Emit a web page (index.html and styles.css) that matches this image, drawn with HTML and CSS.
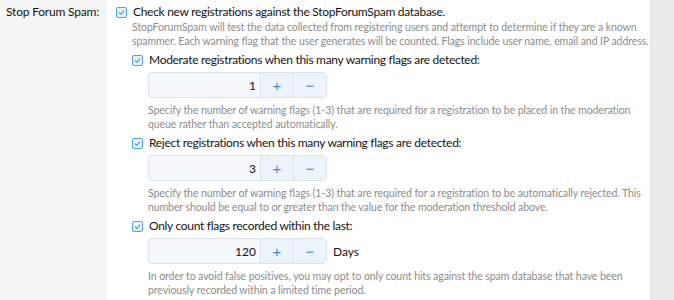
FILE: index.html
```html
<!DOCTYPE html>
<html lang="en">
<head>
    <meta charset="UTF-8">
    <title>Stop Forum Spam</title>
    <link rel="stylesheet" href="styles.css">
</head>
<body>
    <div class="form-row">
        <div class="label-col">Stop Forum Spam:</div>
        <div class="input-col">
            <label class="check">
                <span class="box"><svg viewBox="0 0 10 10"><path d="M2.3 5.2 L4.2 7 L7.8 3.2"/></svg></span>
                Check new registrations against the StopForumSpam database.
            </label>
            <div class="check-body">
                <p class="explain">StopForumSpam will test the data collected from registering users and attempt to determine if they are a known<br>spammer. Each warning flag that the user generates will be counted. Flags include user name, email and IP address.</p>
            </div>

            <div class="dependent">
                <label class="check">
                    <span class="box"><svg viewBox="0 0 10 10"><path d="M2.3 5.2 L4.2 7 L7.8 3.2"/></svg></span>
                    Moderate registrations when this many warning flags are detected:
                </label>
                <div class="check-body">
                    <div class="spin-row">
                        <div class="spinbox">
                            <input class="spin-value" type="text" value="1">
                            <button class="spin-btn">+</button>
                            <button class="spin-btn">&minus;</button>
                        </div>
                    </div>
                    <p class="explain">Specify the number of warning flags (1-3) that are required for a registration to be placed in the moderation<br>queue rather than accepted automatically.</p>
                </div>

                <label class="check">
                    <span class="box"><svg viewBox="0 0 10 10"><path d="M2.3 5.2 L4.2 7 L7.8 3.2"/></svg></span>
                    Reject registrations when this many warning flags are detected:
                </label>
                <div class="check-body">
                    <div class="spin-row">
                        <div class="spinbox">
                            <input class="spin-value" type="text" value="3">
                            <button class="spin-btn">+</button>
                            <button class="spin-btn">&minus;</button>
                        </div>
                    </div>
                    <p class="explain">Specify the number of warning flags (1-3) that are required for a registration to be automatically rejected. This<br>number should be equal to or greater than the value for the moderation threshold above.</p>
                </div>

                <label class="check">
                    <span class="box"><svg viewBox="0 0 10 10"><path d="M2.3 5.2 L4.2 7 L7.8 3.2"/></svg></span>
                    Only count flags recorded within the last:
                </label>
                <div class="check-body">
                    <div class="spin-row">
                        <div class="spinbox">
                            <input class="spin-value" type="text" value="120">
                            <button class="spin-btn">+</button>
                            <button class="spin-btn">&minus;</button>
                        </div>
                        <span class="units">Days</span>
                    </div>
                    <p class="explain">In order to avoid false positives, you may opt to only count hits against the spam database that have been<br>previously recorded within a limited time period.</p>
                </div>
            </div>
        </div>
        <div class="side-col"></div>
    </div>
</body>
</html>
```

FILE: styles.css
```css
body {
    margin: 0;
    font-family: Lato, "Noto Sans", sans-serif;
    color: #141414;
    background-color: #fff;
}
.form-row {
    display: flex;
    height: 300px;
    overflow: hidden;
}
.label-col {
    width: 99px;
    padding-right: 8px;
    padding-top: 3px;
    background-color: #f5f5f5;
    text-align: right;
    font-size: 12px;
    line-height: 18px;
    letter-spacing: -0.2px;
    white-space: nowrap;
}
.input-col {
    flex: 1;
    padding: 3px 0 0 9px;
}
.side-col {
    width: 23px;
    background-color: #ebebeb;
    border-left: 1px solid #e3e3e3;
}
.check {
    display: flex;
    align-items: center;
    font-size: 12px;
    line-height: 18px;
    letter-spacing: -0.3px;
}
.box {
    width: 9px;
    height: 9px;
    border: 1px solid #47a7eb;
    border-radius: 2px;
    background-color: #eaf3fc;
    margin-right: 6px;
    display: flex;
}
.box svg {
    width: 9px;
    height: 9px;
    fill: none;
    stroke: #2f8fd8;
    stroke-width: 1.2;
}
.check-body {
    padding-left: 16px;
}
.explain {
    margin: -1px 0 3px;
    font-size: 10.5px;
    line-height: 14px;
    letter-spacing: -0.08px;
    color: #8c8c8c;
    white-space: nowrap;
}
.dependent {
    padding-left: 16px;
}
.spin-row {
    display: flex;
    align-items: center;
    margin: 3px 0 6px;
}
.spinbox {
    display: flex;
    width: 179px;
    height: 26px;
    box-sizing: border-box;
    border: 1px solid #d8e2ec;
    border-radius: 4px;
    background-color: #f5f8fc;
}
.spin-value {
    width: 111px;
    box-sizing: border-box;
    border: none;
    background: transparent;
    text-align: right;
    padding-right: 4px;
    font-family: inherit;
    font-size: 12px;
    color: #141414;
}
.spin-btn {
    width: 33px;
    border: none;
    border-left: 1px solid #dde6ef;
    background-color: #edf3fa;
    color: #2f8fd8;
    font-size: 15px;
    padding: 0;
}
.units {
    margin-left: 6px;
    font-size: 12px;
}
```
